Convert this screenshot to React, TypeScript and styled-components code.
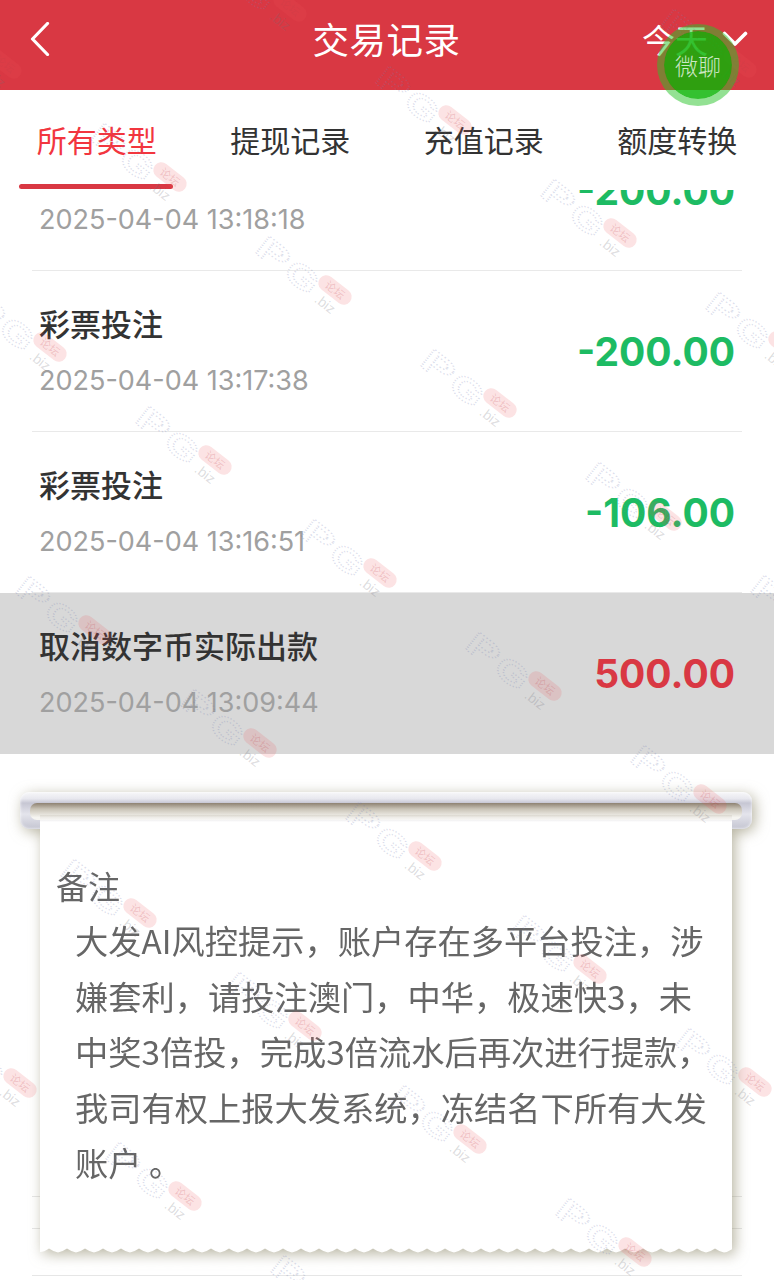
import React from 'react'
import styled, { createGlobalStyle } from 'styled-components'

const RED = '#d93843'
const CJK = `"Noto Sans CJK SC", "Noto Sans", sans-serif`
const LATIN = `Inter, "Noto Sans CJK SC", sans-serif`

const GlobalStyle = createGlobalStyle`
  html, body {
    margin: 0;
    padding: 0;
    background: #fff;
    font-family: ${CJK};
  }
  * {
    box-sizing: border-box;
  }
`

const Page = styled.div`
  position: relative;
  width: 774px;
  height: 1280px;
  overflow: hidden;
  background: #fff;
`

const Header = styled.header`
  display: grid;
  grid-template-columns: 1fr auto 1fr;
  align-items: center;
  height: 90px;
  padding: 0 31px 12px 30px;
  background: ${RED};
  color: #fff;
`

const Title = styled.h1`
  margin: 0;
  font-size: 36.5px;
  font-weight: 400;
  letter-spacing: 0.5px;
  line-height: 1;
`

const RangePicker = styled.div`
  justify-self: end;
  display: flex;
  align-items: center;
  gap: 14px;
  margin-right: -5px;
  font-size: 33px;
  line-height: 1;
`

const Tabs = styled.nav`
  position: relative;
  z-index: 2;
  display: grid;
  grid-template-columns: repeat(4, 1fr);
  height: 100px;
  background: #fff;
`

const Tab = styled.div<{ $active?: boolean }>`
  position: relative;
  display: flex;
  align-items: center;
  justify-content: center;
  padding-bottom: 3px;
  font-size: 30px;
  line-height: 1;
  color: ${({ $active }) => ($active ? '#f2363f' : '#333')};

  ${({ $active }) => $active && `
    &::after {
      content: '';
      position: absolute;
      left: 19px;
      bottom: 1px;
      width: 154px;
      height: 5px;
      border-radius: 3px;
      background: ${RED};
    }
  `}
`

const List = styled.div`
  margin-top: -80px;
`

const Row = styled.div<{ $pressed?: boolean }>`
  height: 161px;
  padding: 0 32px;
  background: ${({ $pressed }) => ($pressed ? '#d8d8d8' : 'transparent')};
`

const RowInner = styled.div<{ $plain?: boolean }>`
  display: flex;
  align-items: center;
  justify-content: space-between;
  height: 100%;
  padding: 0 7px;
  border-bottom: 1px solid ${({ $plain }) => ($plain ? 'transparent' : '#e9e9e9')};
`

const RowText = styled.div`
  display: flex;
  flex-direction: column;
  gap: 24px;
  margin-top: 2px;
`

const RowTitle = styled.div`
  font-size: 31px;
  font-weight: 500;
  line-height: 34px;
  color: #333;
`

const RowDate = styled.div`
  font-family: ${LATIN};
  font-size: 27px;
  line-height: 34px;
  color: #a0a0a0;
`

const Amount = styled.div<{ $income?: boolean }>`
  font-family: ${LATIN};
  font-size: 39px;
  font-weight: 700;
  line-height: 1;
  color: ${({ $income }) => ($income ? RED : '#1dbb63')};
`

const Dividers = styled.div`
  display: flex;
  flex-direction: column;
  padding: 442px 32px 0;
`

const Divider = styled.div<{ $gap: number }>`
  height: 1px;
  margin-bottom: ${({ $gap }) => $gap}px;
  background: #e6e6e6;
`

/* the hanging note, lies over the list */
const Scroll = styled.section`
  position: absolute;
  left: 20px;
  top: 792px;
  z-index: 3;
  width: 732px;
  filter: drop-shadow(3px 3px 7px rgba(125, 120, 85, 0.55));
`

const Rail = styled.div`
  position: relative;
  height: 37px;
  border-radius: 9px;
  background: linear-gradient(#f7f7f9, #e8e8ef 18%, #c6c6d3 30%, #e4e4ec 60%, #c4c5d1);
  box-shadow: inset 0 0 3px #fff;

  &::after {
    content: '';
    position: absolute;
    left: 10px;
    right: 10px;
    top: 11px;
    height: 17px;
    border-radius: 7px;
    background: linear-gradient(#8e8272, #c9c3b6 35%, #f6f5f1 85%);
  }
`

const Paper = styled.div`
  position: relative;
  width: 692px;
  height: 433px;
  margin: -14px auto 0;
  padding: 48px 0 0 16px;
  background: linear-gradient(rgba(150, 140, 120, 0.18), #fff 7px);
  color: #666;
`

const Wave = styled.svg`
  display: block;
  position: relative;
  width: 692px;
  height: 6px;
  margin: 0 auto;
`

const NoteLabel = styled.div`
  font-size: 32px;
  line-height: 44px;
`

const NoteBody = styled.div`
  margin-top: 5px;
  padding-left: 19px;
  font-size: 33.25px;
  line-height: 55.5px;
`

const NoteLine = styled.div`
  white-space: nowrap;
`

const Marks = styled.svg`
  position: absolute;
  inset: 0;
  z-index: 4;
  pointer-events: none;
`

const MarkLetter = styled.text`
  font-family: "Liberation Sans", sans-serif;
  font-size: 32px;
  font-weight: 700;
  fill: none;
  stroke: rgba(115, 125, 175, 0.26);
  stroke-width: 1.4;
  stroke-dasharray: 1 1.5;
`

const MarkPillText = styled.text`
  font-family: ${CJK};
  font-size: 11px;
  fill: rgba(190, 60, 70, 0.22);
  text-anchor: middle;
`

const MarkSite = styled.text`
  font-family: "Liberation Sans", sans-serif;
  font-size: 14px;
  fill: rgba(110, 110, 120, 0.24);
`

const ChatBadge = styled.div`
  position: absolute;
  left: 657px;
  top: 24px;
  z-index: 5;
  display: flex;
  align-items: center;
  justify-content: center;
  width: 82px;
  height: 82px;
  border: 7px solid rgba(40, 195, 40, 0.5);
  border-radius: 50%;
  background: rgba(12, 181, 6, 0.83);
  background-clip: padding-box;
  font-size: 23px;
  font-weight: 300;
  line-height: 1;
  color: rgba(255, 255, 255, 0.75);
`

const records = [
  { title: '彩票投注', date: '2025-04-04 13:18:18', amount: '-200.00' },
  { title: '彩票投注', date: '2025-04-04 13:17:38', amount: '-200.00' },
  { title: '彩票投注', date: '2025-04-04 13:16:51', amount: '-106.00' },
  { title: '取消数字币实际出款', date: '2025-04-04 13:09:44', amount: '500.00', income: true, pressed: true },
]

const noteLines = [
  '大发AI风控提示，账户存在多平台投注，涉',
  '嫌套利，请投注澳门，中华，极速快3，未',
  '中奖3倍投，完成3倍流水后再次进行提款，',
  '我司有权上报大发系统，冻结名下所有大发',
  '账户 。',
]

// the watermark repeats on a skewed lattice
const markPositions: { x: number; y: number }[] = []
for (let i = -6; i <= 4; i++) {
  for (let j = -4; j <= 9; j++) {
    const x = 335 + 285 * i + 165 * j
    const y = 290 - 57 * i + 113 * j
    if (x > -60 && x < 860 && y > -40 && y < 1340) markPositions.push({ x, y })
  }
}

const Wavy = () => {
  const teeth = Math.ceil(692 / 18)
  let d = 'M0 0 V4'
  for (let i = 0; i < teeth; i++) {
    const x = i * 18
    d += ` Q${x + 4} 4 ${x + 9} 0.5 Q${x + 14} 4 ${x + 18} 4.5`
  }
  d += ' V0 Z'
  return (
    <Wave viewBox="0 0 692 6" preserveAspectRatio="none">
      <path d={d} fill="#fff" />
    </Wave>
  )
}

const App = () => {
  return (
    <Page>
      <GlobalStyle />
      <Header>
        <svg width="20" height="34" viewBox="0 0 20 34" fill="none">
          <path d="M17.5 1.5 L2.5 17 L17.5 32.5" stroke="#fff" strokeWidth="3.2" strokeLinecap="round" strokeLinejoin="round" />
        </svg>
        <Title>交易记录</Title>
        <RangePicker>
          今天
          <svg width="26" height="16" viewBox="0 0 26 16" fill="none">
            <path d="M2.5 2.5 L13 13 L23.5 2.5" stroke="#fff" strokeWidth="3.6" strokeLinecap="round" strokeLinejoin="round" />
          </svg>
        </RangePicker>
      </Header>

      <Tabs>
        <Tab $active>所有类型</Tab>
        <Tab>提现记录</Tab>
        <Tab>充值记录</Tab>
        <Tab>额度转换</Tab>
      </Tabs>

      <List>
        {records.map((r) => (
          <Row key={r.date} $pressed={r.pressed}>
            <RowInner $plain={r.pressed}>
              <RowText>
                <RowTitle>{r.title}</RowTitle>
                <RowDate>{r.date}</RowDate>
              </RowText>
              <Amount $income={r.income}>{r.amount}</Amount>
            </RowInner>
          </Row>
        ))}
      </List>

      <Dividers>
        <Divider $gap={31} />
        <Divider $gap={46} />
        <Divider $gap={0} />
      </Dividers>

      <Scroll>
        <Rail />
        <Paper>
          <NoteLabel>备注</NoteLabel>
          <NoteBody>
            {noteLines.map((line) => (
              <NoteLine key={line}>{line}</NoteLine>
            ))}
          </NoteBody>
        </Paper>
        <Wavy />
      </Scroll>

      <Marks width="774" height="1280" viewBox="0 0 774 1280">
        {markPositions.map(({ x, y }) => (
          <g key={`${x}-${y}`} transform={`translate(${x} ${y}) rotate(38)`}>
            <MarkLetter x="-88" y="20" textLength="34" lengthAdjust="spacingAndGlyphs">P</MarkLetter>
            <MarkLetter x="-51" y="21" textLength="34" lengthAdjust="spacingAndGlyphs">G</MarkLetter>
            <rect x="-19" y="-8" width="38" height="16" rx="8" fill="rgba(235, 80, 85, 0.16)" />
            <MarkPillText x="0" y="4">论坛</MarkPillText>
            <MarkSite x="-10" y="22">.biz</MarkSite>
          </g>
        ))}
      </Marks>

      <ChatBadge>微聊</ChatBadge>
    </Page>
  )
}

export default App
